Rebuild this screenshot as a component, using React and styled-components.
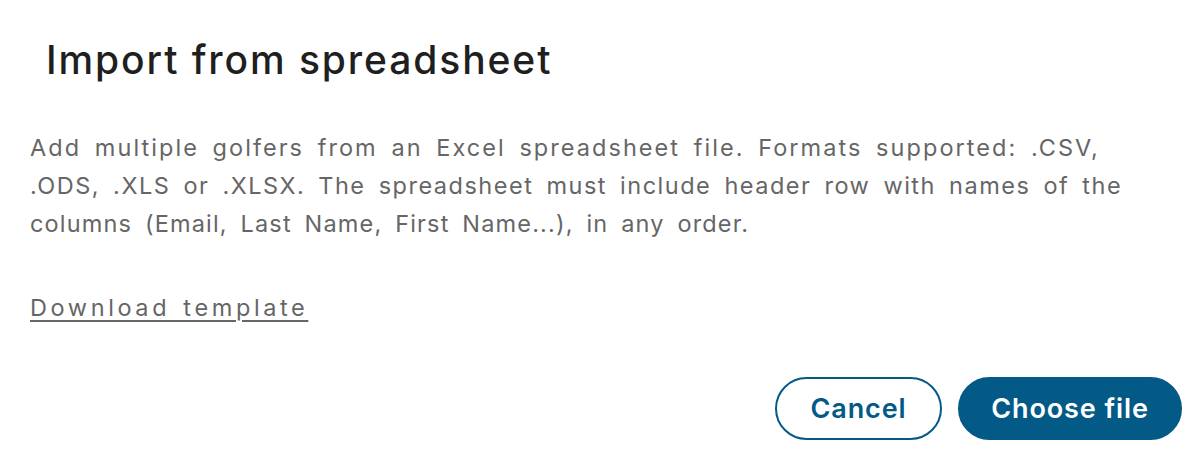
import React from 'react';
import styled, { createGlobalStyle } from 'styled-components';

const Global = createGlobalStyle`
  html, body {
    margin: 0;
    padding: 0;
    background: #fff;
  }
  body {
    font-family: Inter, "Noto Sans", sans-serif;
  }
`;

const Dialog = styled.div`
  width: 1196px;
  height: 454px;
  box-sizing: border-box;
  padding: 34px 14px 0 30px;
  display: flex;
  flex-direction: column;
`;

const Title = styled.h2`
  margin: 0 0 0 16px;
  font-size: 39px;
  line-height: 52px;
  font-weight: 500;
  color: #1f1f1f;
  letter-spacing: 1.9px;
`;

const Body = styled.p`
  margin: 43px 0 0;
  font-size: 23.5px;
  line-height: 38px;
  color: #666;
  word-spacing: 5px;
  white-space: nowrap;
`;

// Each wrapped line of the copy, tracked so it ends where the original does
const Line = styled.span`
  display: block;
  letter-spacing: ${p => p.$ls}px;
`;

const TemplateLink = styled.a`
  margin-top: 46px;
  align-self: flex-start;
  font-size: 23.5px;
  line-height: 38px;
  color: #666;
  text-decoration: underline;
  text-underline-offset: 4px;
  text-decoration-thickness: 2px;
  letter-spacing: 3.6px;
  word-spacing: 3px;
  cursor: pointer;
`;

const Actions = styled.div`
  margin-top: 50px;
  display: flex;
  justify-content: flex-end;
  gap: 16px;
`;

const Button = styled.button`
  height: 63px;
  padding: 0;
  width: ${p => p.$w}px;
  border-radius: 32px;
  border: 2px solid #035a87;
  background: ${p => (p.$primary ? '#035a87' : '#fff')};
  color: ${p => (p.$primary ? '#fff' : '#035a87')};
  font-family: Inter, "Noto Sans", sans-serif;
  font-size: 27px;
  font-weight: 600;
  letter-spacing: 0.9px;
  cursor: pointer;
`;

export default function App() {
  return (
    <>
      <Global />
      <Dialog>
        <Title>Import from spreadsheet</Title>
        <Body>
          <Line $ls={2.05}>Add multiple golfers from an Excel spreadsheet file. Formats supported: .CSV,</Line>
          <Line $ls={1.5}>.ODS, .XLS or .XLSX. The spreadsheet must include header row with names of the</Line>
          <Line $ls={1.17}>columns (Email, Last Name, First Name...), in any order.</Line>
        </Body>
        <TemplateLink>Download template</TemplateLink>
        <Actions>
          <Button $w={167}>Cancel</Button>
          <Button $w={224} $primary>Choose file</Button>
        </Actions>
      </Dialog>
    </>
  );
}
